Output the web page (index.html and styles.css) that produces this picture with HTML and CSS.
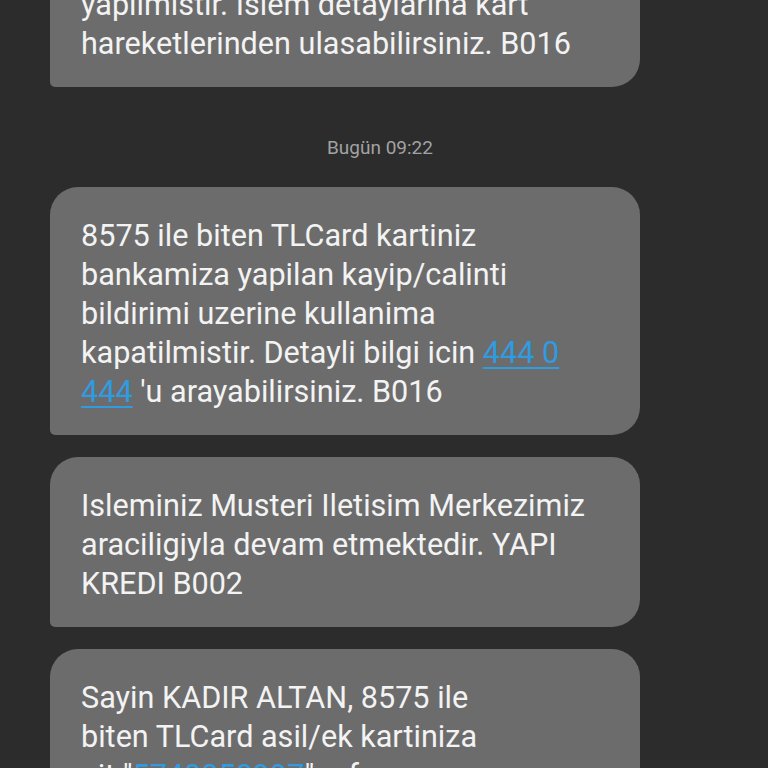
FILE: index.html
```html
<!DOCTYPE html>
<html lang="tr">
<head>
<meta charset="utf-8">
<title>Mesajlar</title>
<link rel="stylesheet" href="styles.css">
</head>
<body>
<main class="thread">
  <div class="bubble bubble-first">
    <p class="msg">Kartinizla yapilan son islem basariyla<br>yapilmistir. Islem detaylarina kart<br>hareketlerinden ulasabilirsiniz. B016</p>
  </div>
  <div class="stamp">Bugün 09:22</div>
  <div class="bubble">
    <p class="msg">8575 ile biten TLCard kartiniz<br>bankamiza yapilan kayip/calinti<br>bildirimi uzerine kullanima<br>kapatilmistir. Detayli bilgi icin <a class="link" href="#">444 0</a><br><a class="link" href="#">444</a> 'u arayabilirsiniz. B016</p>
  </div>
  <div class="bubble">
    <p class="msg">Isleminiz Musteri Iletisim Merkezimiz<br>araciligiyla devam etmektedir. YAPI<br>KREDI B002</p>
  </div>
  <div class="bubble">
    <p class="msg">Sayin KADIR ALTAN, 8575 ile<br>biten TLCard asil/ek kartiniza<br>ait "<a class="link" href="#">5740050997</a>" referans<br>numarali talebiniz alinmistir.</p>
  </div>
</main>
</body>
</html>
```

FILE: styles.css
```css
html, body {
  margin: 0;
  padding: 0;
  background: #2c2c2c;
  height: 768px;
  overflow: hidden;
}

.thread {
  display: flex;
  flex-direction: column;
  align-items: flex-start;
  padding-left: 50px;
  margin-top: -83px;
}

.bubble {
  width: 590px;
  box-sizing: border-box;
  background: #6c6c6c;
  border-radius: 28px 28px 28px 5px;
  padding: 29px 10px 24px 31px;
  margin-bottom: 22px;
}

.bubble-first {
  margin-bottom: 0;
}

.msg {
  margin: 0;
  font-family: Roboto, "Noto Sans", sans-serif;
  font-size: 30.6px;
  line-height: 39px;
  color: #f3f3f3;
  white-space: nowrap;
}

.link {
  color: #2f9be0;
  text-decoration: underline;
  text-decoration-thickness: 2px;
  text-underline-offset: 4px;
}

.stamp {
  margin: 49px 0 27px -50px;
  width: 768px;
  font-family: Roboto, "Noto Sans", sans-serif;
  font-size: 19px;
  line-height: 24px;
  color: #a2a2a2;
  text-align: center;
  text-indent: -8px;
}
```
